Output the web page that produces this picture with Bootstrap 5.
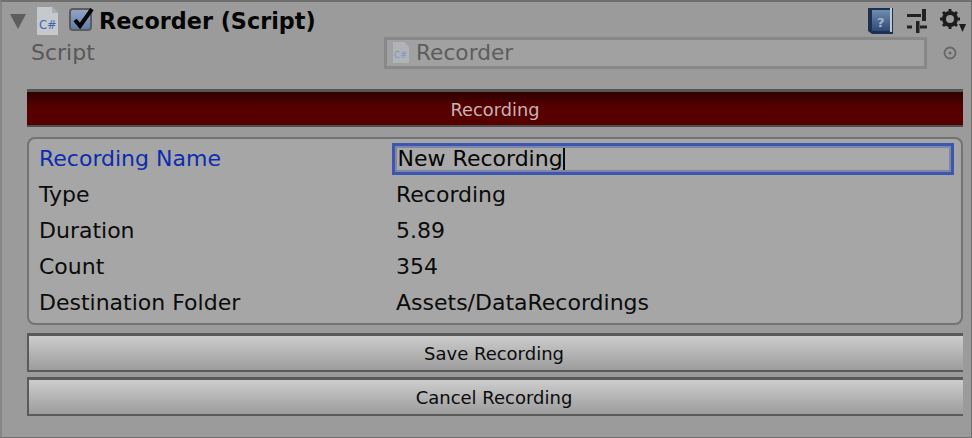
<!DOCTYPE html>
<html><head><meta charset="utf-8">
<link href="https://cdn.jsdelivr.net/npm/bootstrap@5.3.0/dist/css/bootstrap.min.css" rel="stylesheet">
<style>
html,body{margin:0;height:438px;overflow:hidden;background:#9b9b9b;}
body{font-family:"DejaVu Sans",sans-serif;font-size:22px;color:#0b0b0b;}
.insp{width:972px;height:438px;border-top:2px solid #6f6f6f;border-left:2px solid #858585;border-right:1px solid #6f6f6f;border-bottom:1px solid #6f6f6f;}
.hdr{height:34px;padding-top:3px;}
.fold{width:0;height:0;border-left:8px solid transparent;border-right:8px solid transparent;border-top:15px solid #5e5e5e;margin-left:8px;margin-top:1px;}
.cs-ico{width:21px;height:28px;margin-left:11px;}
.chk{width:25px;height:25px;margin-left:11px;}
.ttl{font-weight:700;font-size:22.3px;margin-left:5px;line-height:32px;color:#050505;}
.tools{margin-left:auto;margin-right:4px;}
.tl-a{margin-right:13px;}
.tl-b{margin-right:13px;}
.scr{height:33px;}
.scr-l{width:382px;padding-left:29px;color:#585858;font-size:22px;line-height:33px;}
.scr-f{width:543px;height:32px;border:3px solid #888;background:#a1a1a1;color:#5d5d5d;font-size:21.7px;line-height:26px;}
.scr-f svg{margin:0 7px 0 6px;}
.tgt{margin-left:16px;}
.bar{height:38px;margin:20px 8px 0 25px;border-top:3px solid #575757;border-bottom:2px solid #4f4f4f;background:linear-gradient(#300000,#560000 45%,#560000);color:#c4b4b4;font-size:17.8px;text-align:center;line-height:36px;}
.pnl{height:188px;margin:10px 8px 0 25px;border:2px solid #737373;border-radius:8px;background:#a6a6a6;padding:2px 7px 0 10px;}
.rw{height:36px;line-height:36px;}
.rw-l{width:357px;}
.nm{color:#0c2cb0;}
.inp{width:563px;height:32px;margin:2px 0 0 -4px;border:3px solid #3f56b0;outline:2px solid #7c86a8;outline-offset:-5px;background:#a9a9a9;line-height:25px;padding-left:3px;color:#050505;white-space:nowrap;}
.caret-bar{display:inline-block;width:2px;height:24px;background:#0b0b0b;vertical-align:-4px;}
.bt{height:39px;margin:8px 8px 0 25px;border-top:3px solid #5a5a5a;border-bottom:2px solid #5a5a5a;border-left:2px solid #5a5a5a;background:linear-gradient(#cdcdcd,#9c9c9c);font-size:18px;text-align:center;line-height:36px;color:#0b0b0b;padding-right:4px;}
.bt2{margin-top:5px;}
</style></head><body>
<div class="insp">
 <div class="hdr d-flex align-items-center">
  <span class="fold"></span>
  <svg class="cs-ico" viewBox="0 0 21 28"><path d="M0 0H15L21 6V28H0Z" fill="#c6c9cc"/><path d="M15 0L21 6H15Z" fill="#a9adb1"/><text x="2" y="22" font-family="DejaVu Sans" font-size="11.5" fill="#3f66b5">C#</text></svg>
  <svg class="chk" viewBox="0 0 25 25"><defs><linearGradient id="cg" x1="0" y1="0" x2="0" y2="1"><stop offset="0" stop-color="#92a8c8"/><stop offset="1" stop-color="#5d7ca6"/></linearGradient></defs><rect x="1" y="1" width="21" height="21" rx="3" fill="url(#cg)" stroke="#5c5c5c" stroke-width="2"/><path d="M6 12L11 18L23 1" fill="none" stroke="#050505" stroke-width="4"/></svg>
  <span class="ttl">Recorder (Script)</span>
  <div class="tools d-flex align-items-center">
   <svg class="tl-a" width="26" height="28" viewBox="0 0 26 28"><defs><linearGradient id="hg" x1="0" y1="0" x2="0" y2="1"><stop offset="0" stop-color="#6f8cb0"/><stop offset="1" stop-color="#2e4a76"/></linearGradient></defs><path d="M0 1H25V27H4L0 24Z" fill="#1e3050"/><rect x="4" y="3" width="18" height="21" fill="url(#hg)"/><rect x="22" y="1" width="2" height="24" fill="#c0c8d4"/><text x="9" y="20" font-family="DejaVu Sans" font-weight="700" font-size="13" fill="#a4b4c8">?</text></svg>
   <svg class="tl-b" width="20" height="24" viewBox="0 0 20 24"><path d="M0 6.500H14M0 18H5M13 18H20" stroke="#222" stroke-width="3"/><rect x="15" y="0" width="4" height="12" fill="#222"/><rect x="9" y="12" width="3.500" height="12" fill="#222"/></svg>
   <svg width="27" height="24" viewBox="0 0 27 24"><circle cx="10" cy="10" r="6" fill="none" stroke="#1c1c1c" stroke-width="4"/><path d="M10 0V20M0 10H20M3 3L17 17M17 3L3 17" stroke="#1c1c1c" stroke-width="3" stroke-dasharray="3.500 13"/><path d="M19 15H26L22.500 23Z" fill="#1c1c1c"/></svg>
  </div>
 </div>
 <div class="scr d-flex align-items-center">
  <div class="scr-l">Script</div>
  <div class="scr-f d-flex align-items-center">
   <svg width="16" height="21" viewBox="0 0 16 21"><path d="M0 0H11L16 5V21H0Z" fill="#b0b4b8"/><text x="1" y="16" font-family="DejaVu Sans" font-size="8.500" fill="#7d93bd">C#</text></svg>Recorder
  </div>
  <svg class="tgt" width="14" height="14" viewBox="0 0 14 14"><circle cx="7" cy="7" r="5.500" fill="none" stroke="#676767" stroke-width="1.800"/><circle cx="7" cy="7" r="1.500" fill="#676767"/></svg>
 </div>
 <div class="bar">Recording</div>
 <div class="pnl">
  <div class="rw d-flex"><div class="rw-l nm">Recording Name</div><div class="inp">New Recording<span class="caret-bar"></span></div></div>
  <div class="rw d-flex"><div class="rw-l">Type</div><div>Recording</div></div>
  <div class="rw d-flex"><div class="rw-l">Duration</div><div>5.89</div></div>
  <div class="rw d-flex"><div class="rw-l">Count</div><div>354</div></div>
  <div class="rw d-flex"><div class="rw-l">Destination Folder</div><div>Assets/DataRecordings</div></div>
 </div>
 <div class="bt">Save Recording</div>
 <div class="bt bt2">Cancel Recording</div>
</div>
</body></html>
